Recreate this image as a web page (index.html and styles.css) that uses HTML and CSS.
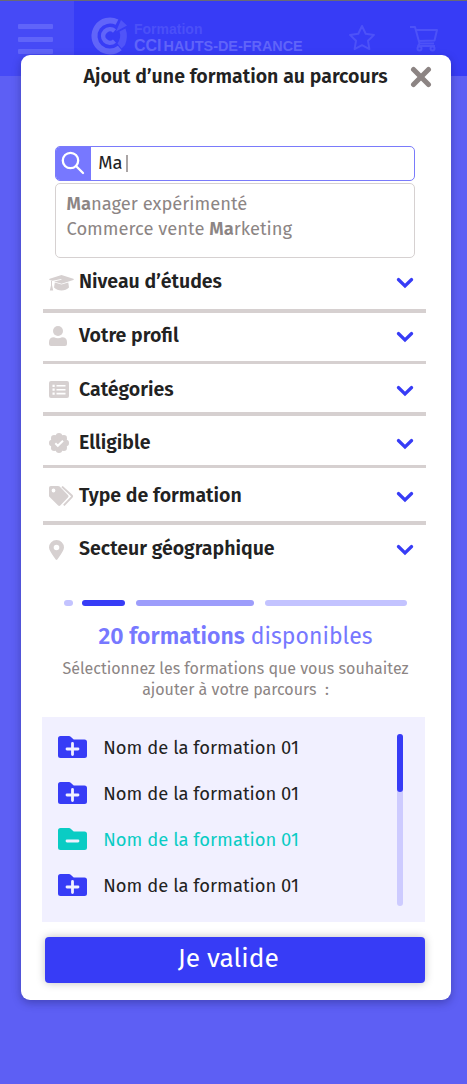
FILE: index.html
```
<!DOCTYPE html>
<html lang="fr">
<head>
<meta charset="utf-8">
<title>Ajout d’une formation au parcours</title>
<link rel="stylesheet" href="styles.css">
</head>
<body>
<svg class="defs" aria-hidden="true">
  <symbol id="chevron" viewBox="0 0 18 12"><path d="M2.400 2.500 9 9l6.600-6.500" fill="none" stroke="currentColor" stroke-width="3.200" stroke-linecap="round"/></symbol>
  <symbol id="folder" viewBox="0 0 29 22"><path d="M2.500 0H11q1 0 1.700.7L15.700 3.500H26.500Q29 3.500 29 6v13.500Q29 22 26.500 22h-24Q0 22 0 19.500v-17Q0 0 2.500 0Z" fill="currentColor"/></symbol>
</svg>
<header class="header">
  <div class="menu"><i></i><i></i><i></i></div>
  <svg class="logo" viewBox="0 0 36 40">
    <g fill="none" stroke="currentColor">
      <path d="M26 5.200A15.500 15.500 0 1 0 28.800 31" stroke-width="6"/>
      <path d="M23.500 13.900A6.800 6.800 0 1 0 23.500 24.100" stroke-width="4.600"/>
    </g>
    <path class="dim" d="M30 3 36 8.500 25 14.500ZM34.500 11.500q3 8-.5 16.500l-3.500 3.500-4-5q4-6 2-12Z"/>
  </svg>
  <div class="brand"><span class="brand-top">Formation</span><span class="brand-bottom"><b>CCI</b> HAUTS-DE-FRANCE</span></div>
  <svg class="star" viewBox="0 0 28 27"><path d="m14 2 3.700 7.700 8.300 1.200-6 5.900 1.400 8.300L14 21.200l-7.400 3.900L8 16.800l-6-5.900 8.300-1.200Z"/></svg>
  <svg class="cart" viewBox="0 0 30 27"><path d="M1 2h5l4.500 16.500H25M7 5h21l-2.500 10.500L9.500 16M10.500 18.500 9 21h17"/><circle cx="10.500" cy="23.500" r="2"/><circle cx="23.500" cy="23.500" r="2"/></svg>
</header>

<main class="modal">
  <div class="modal-head">
    <h1>Ajout d’une formation au parcours</h1>
    <svg class="close" viewBox="0 0 20 20"><path d="m3.200 3.200 13.600 13.600m0-13.600L3.200 16.800"/></svg>
  </div>

  <div class="search">
    <span class="search-icon"><svg viewBox="0 0 24 24"><circle cx="9.500" cy="9.500" r="7.700"/><path d="m15 15 7 7"/></svg></span>
    <span class="query">Ma</span><i class="caret"></i>
  </div>
  <div class="suggestions">
    <div><b>Ma</b>nager expérimenté</div>
    <div>Commerce vente <b>Ma</b>rketing</div>
  </div>

  <ul class="filters">
    <li class="f1"><svg width="25" height="16" viewBox="0 0 25 16"><path d="M12.500 0 24.300 3.800q1 .6 0 1.200L12.500 8.800 5 6.400l7.500-1.600L12.300 4 3.600 5.800 .7 5q-1-.6 0-1.200ZM2 5.800l1 .3v4l1.200 5.400H.8L2 10.500ZM5.800 7.500l6.700 2.100 6.800-2.100.7 5q-3 3-7.500 3T5 12.500Z"/></svg><span>Niveau d’études</span><svg class="chev"><use href="#chevron"/></svg></li>
    <li class="f2"><svg width="18" height="20" viewBox="0 0 18 20"><circle cx="9" cy="5" r="5"/><path d="M5 11.300q4 1.700 8 0 5 0 5 5V18q0 2-2 2H2q-2 0-2-2v-1.700q0-5 5-5Z"/></svg><span>Votre profil</span><svg class="chev"><use href="#chevron"/></svg></li>
    <li class="f3"><svg width="20" height="17" viewBox="0 0 20 17"><rect width="20" height="17" rx="2"/><path d="M7.500 4.800h9M7.500 8.700h9M7.500 12.600h9" stroke="#fff" stroke-width="1.600"/><path d="M3.500 4.800h2.200M3.500 8.700h2.200M3.500 12.600h2.200" stroke="#fff" stroke-width="2.200"/></svg><span>Catégories</span><svg class="chev"><use href="#chevron"/></svg></li>
    <li class="f4"><svg width="20" height="20" viewBox="0 0 20 20"><circle cx="10" cy="10" r="8.300"/><circle cx="10" cy="3.200" r="3.200"/><circle cx="14.800" cy="5.200" r="3.200"/><circle cx="16.800" cy="10" r="3.200"/><circle cx="14.800" cy="14.800" r="3.200"/><circle cx="10" cy="16.800" r="3.200"/><circle cx="5.200" cy="14.800" r="3.200"/><circle cx="3.200" cy="10" r="3.200"/><circle cx="5.200" cy="5.200" r="3.200"/><path d="m6.300 10.300 2.500 2.500L14 7.700" fill="none" stroke="#fff" stroke-width="2"/></svg><span>Elligible</span><svg class="chev"><use href="#chevron"/></svg></li>
    <li class="f5"><svg width="25" height="20" viewBox="0 0 25 20"><path fill-rule="evenodd" d="M1.800 0H9q1 0 1.600.6l8.300 8.300q1.200 1.200 0 2.500l-7.400 7.900q-1.300 1.200-2.600 0L.6 11.100Q0 10.500 0 9.500V1.800Q0 0 1.800 0Zm2.700 2.600a1.900 1.900 0 1 0 0 3.800 1.900 1.900 0 0 0 0-3.800Z"/><path d="m13 .6 9.700 8.900q.8.800 0 1.600l-7.900 8.300" fill="none" stroke="currentColor" stroke-width="1.900"/></svg><span>Type de formation</span><svg class="chev"><use href="#chevron"/></svg></li>
    <li class="f6"><svg width="15" height="20" viewBox="0 0 15 20"><path fill-rule="evenodd" d="M7.500 0A7.500 7.500 0 0 1 15 7.500Q15 10.500 8.300 19.500q-.8.900-1.600 0Q0 10.500 0 7.500A7.500 7.500 0 0 1 7.500 0Zm0 4.700a2.800 2.800 0 1 0 0 5.600 2.800 2.800 0 0 0 0-5.600Z"/></svg><span>Secteur géographique</span><svg class="chev"><use href="#chevron"/></svg></li>
  </ul>

  <div class="steps"><i class="step-a"></i><i class="step-b"></i><i class="step-c"></i><i class="step-d"></i></div>

  <h2><b>20 formations</b> disponibles</h2>
  <p class="hint">Sélectionnez les formations que vous souhaitez<br>ajouter à votre parcours&nbsp; :</p>

  <section class="results">
    <ul>
      <li><svg class="folder"><use href="#folder"/><path d="M14.500 7.500v11M9 13h11"/></svg>Nom de la formation 01</li>
      <li><svg class="folder"><use href="#folder"/><path d="M14.500 7.500v11M9 13h11"/></svg>Nom de la formation 01</li>
      <li class="selected"><svg class="folder"><use href="#folder"/><path d="M9 13h11"/></svg>Nom de la formation 01</li>
      <li><svg class="folder"><use href="#folder"/><path d="M14.500 7.500v11M9 13h11"/></svg>Nom de la formation 01</li>
    </ul>
    <div class="track"><div class="thumb"></div></div>
  </section>

  <button class="submit">Je valide</button>
</main>
</body>
</html>
```
FILE: styles.css
```
* { box-sizing: border-box; }
body {
  margin: 0;
  height: 1084px;
  overflow: hidden;
  position: relative;
  background: #5d5ff4;
  font-family: "Fira Sans", "Noto Sans", sans-serif;
  color: #222;
}
h1, h2, p, ul { margin: 0; padding: 0; }
ul { list-style: none; }
svg { display: block; flex: none; }
.defs { width: 0; height: 0; position: absolute; }

.header {
  height: 76px;
  border-top: 1px solid #696a75;
  background: #373cf6;
  display: flex;
  align-items: flex-start;
}
.menu {
  width: 74px;
  height: 75px;
  padding: 23px 0 0 18px;
  background: #464af6;
  display: flex;
  flex-direction: column;
  gap: 7.5px;
}
.menu i { width: 35px; height: 5px; border-radius: 1px; background: #6064f9; }
.logo { width: 36px; height: 40px; margin: 16px 0 0 17px; color: #6165f9; overflow: visible; }
.logo .dim { fill: #5054f8; }
.brand {
  width: 172px;
  margin: 20px 0 0 7px;
  display: flex;
  flex-direction: column;
  font-family: "Liberation Sans", sans-serif;
  font-weight: 700;
  white-space: nowrap;
}
.brand-top { font-size: 14px; line-height: 17px; color: #4b50f8; }
.brand-bottom { font-size: 14.400px; line-height: 15px; color: #6064f9; word-spacing: -2px; }
.brand-bottom b { font-size: 16px; }
.star { width: 28px; height: 27px; margin: 23px 0 0 42px; }
.cart { width: 30px; height: 27px; margin: 24px 0 0 33px; }
.star path, .cart * { fill: none; stroke: #4d52f8; stroke-width: 2; stroke-linejoin: round; }

.modal {
  position: absolute;
  left: 20.500px;
  top: 54.500px;
  width: 430px;
  height: 945.500px;
  padding-left: 21.500px;
  border-radius: 9px;
  background: #fff;
  box-shadow: 0 3px 9px rgba(20, 20, 80, .35);
}
.modal-head {
  height: 91.500px;
  padding: 7px 0 0 41.500px;
  display: flex;
  align-items: flex-start;
}
h1 { width: 326px; font-size: 19.550px; line-height: 29px; font-weight: 600; white-space: nowrap; }
.close { width: 22px; height: 22px; margin-top: 4px; }
.close path { stroke: #8c8483; stroke-width: 4.600; stroke-linecap: round; }

.search {
  width: 360px;
  height: 35px;
  margin-left: 13px;
  border: 1.500px solid #7a7bfb;
  border-radius: 5px;
  display: flex;
  align-items: center;
  overflow: hidden;
}
.search-icon { width: 35px; height: 35px; padding: 5px 0 0 5px; background: #7778ff; }
.search-icon svg { width: 24px; height: 24px; fill: none; stroke: #fff; stroke-width: 2.300; stroke-linecap: round; }
.query { width: 30px; padding-left: 7.300px; font-size: 18.400px; line-height: 28px; letter-spacing: -.2px; margin-top: -1px; }
.caret { width: 1.500px; height: 17px; margin-left: 5px; background: #aaa5a5; }

.suggestions {
  width: 360px;
  height: 75px;
  margin: 2px 0 0 13px;
  padding: 8px 0 0 10.500px;
  border: 1.500px solid #d6d1d1;
  border-radius: 5px;
  color: #8c8584;
  font-size: 18.350px;
  line-height: 25px;
  white-space: nowrap;
}
.suggestions b { font-weight: 600; }

.filters { width: 383px; margin-left: 1px; padding-top: 6px; }
.filters li {
  padding: 4px 12px 0 6px;
  border-bottom: 4px solid #d6d0d0;
  display: flex;
  align-items: flex-start;
  color: #d6d0d0;
  fill: currentColor;
}
.filters li > svg:first-child { margin: 8px 0 0; }
.filters span { margin-right: auto; font-size: 19.550px; line-height: 30px; font-weight: 600; color: #222; white-space: nowrap; }
.filters .chev { width: 18px; height: 12px; margin-top: 9.500px; color: #373cf6; }
.filters .f1 { height: 49px; padding-top: 3px; }
.filters .f2 { height: 51px; padding-top: 8px; border-bottom-width: 3px; }
.filters .f3 { height: 52px; padding-top: 11px; }
.filters .f4 { height: 52px; padding-top: 12px; border-bottom-width: 3px; }
.filters .f5 { height: 57px; padding-top: 13px; }
.filters .f6 { height: 52px; padding-top: 9px; border: 0; }
.filters .f2 > svg:first-child { margin-top: 5px; }
.filters .f3 > svg:first-child { margin-top: 6px; }
.filters .f4 > svg:first-child { margin-top: 5px; }
.filters .f5 > svg:first-child { margin-top: 5px; }
.filters .f6 > svg:first-child { margin-top: 6px; }
.f1 span { margin-left: 5px; }
.f2 span { margin-left: 12px; }
.f3 span { margin-left: 10px; }
.f4 span { margin-left: 10px; }
.f5 span { margin-left: 5px; }
.f6 span { margin-left: 15px; }

.steps { height: 6px; margin: 23px 0 0 22px; display: flex; }
.steps i { height: 6px; border-radius: 3px; }
.step-a { width: 8.500px; background: #c3c3ff; }
.step-b { width: 43px; margin-left: 9.500px; background: #373cf6; }
.step-c { width: 117.500px; margin-left: 11px; background: #9d9dfb; }
.step-d { width: 142.500px; margin-left: 11px; background: #c3c3ff; }

h2 { width: 387px; margin-top: 15px; font-size: 23px; line-height: 31px; font-weight: 400; color: #7778ff; text-align: center; white-space: nowrap; }
h2 b { font-weight: 600; }
.hint { width: 387px; margin-top: 6px; font-size: 16.050px; line-height: 21px; color: #8c8584; text-align: center; white-space: nowrap; }

.results {
  width: 383px;
  height: 205px;
  margin-top: 17px;
  padding: 7px 22px 0 16px;
  background: #f1f0ff;
  display: flex;
  justify-content: space-between;
}
.results li { height: 46px; padding-top: 2px; display: flex; align-items: center; gap: 16.300px; font-size: 18.400px; line-height: 28px; white-space: nowrap; }
.results .selected { color: #0accc4; }
.folder { width: 29px; height: 22px; margin-bottom: 3px; color: #373cf6; }
.selected .folder { color: #0accc4; }
.folder path { stroke: #f1f0ff; stroke-width: 2.800; stroke-linecap: round; }
.track { width: 6px; height: 172px; margin-top: 10px; border-radius: 3px; background: #cdcbff; }
.thumb { height: 58px; border-radius: 3px; background: #373cf6; }

.submit {
  display: block;
  width: 380.500px;
  height: 46px;
  margin: 15px 0 0 2.500px;
  padding: 0 13px 3px 0;
  border: 0;
  border-radius: 4px;
  background: #373cf6;
  box-shadow: 0 0 9px rgba(0, 0, 0, .25);
  color: #fff;
  font: 400 26.300px/43px "Fira Sans", "Noto Sans", sans-serif;
}
```
